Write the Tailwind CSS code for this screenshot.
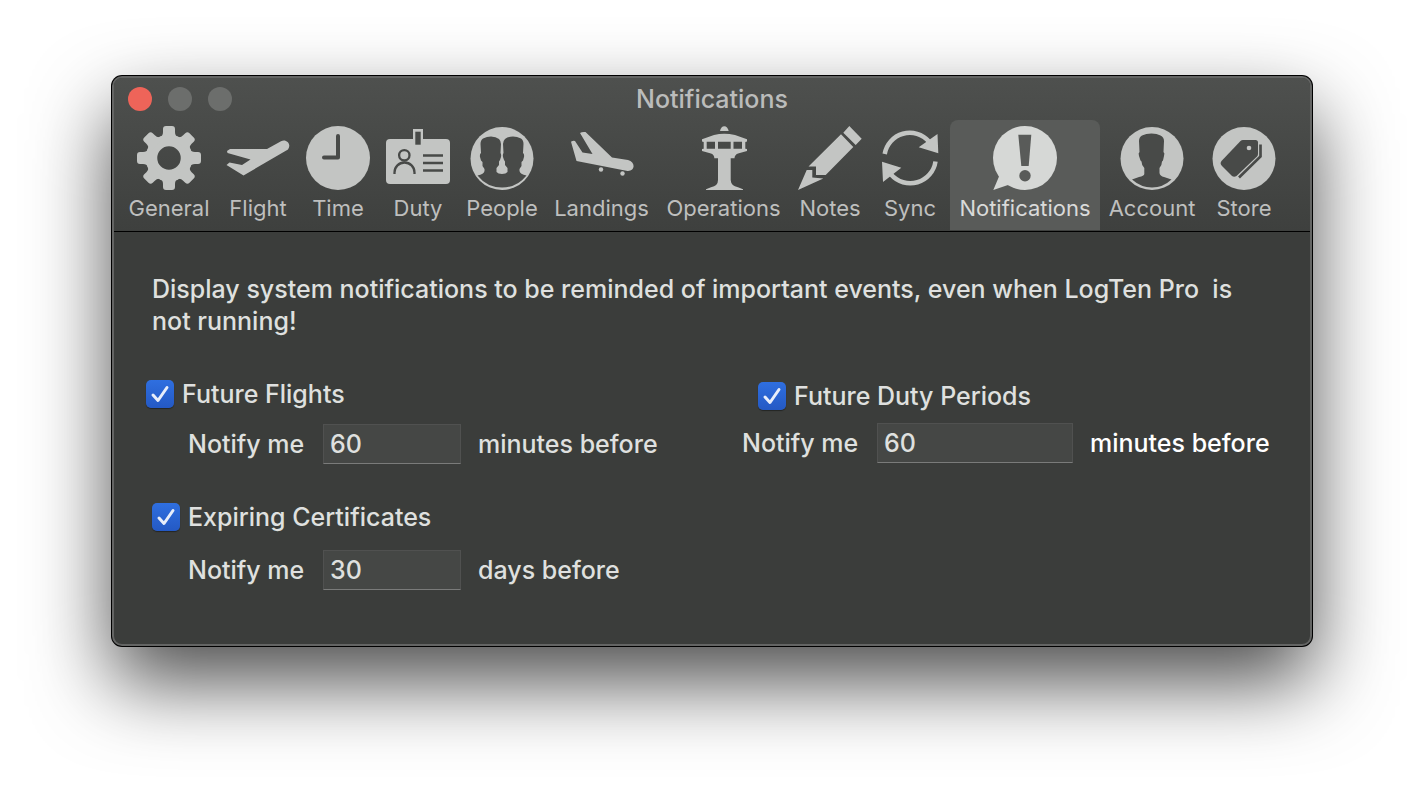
<!DOCTYPE html>
<html lang="en">
  <head>
    <meta charset="UTF-8" />
    <meta name="viewport" content="width=device-width, initial-scale=1.0" />
    <title>Notifications</title>
    <script src="https://cdn.jsdelivr.net/npm/@tailwindcss/browser@4"></script>
  </head>
  <body class="bg-white font-['Inter','Liberation_Sans',sans-serif] text-[25px] leading-8 font-medium text-[#dfe0df]">
    <main
      class="mx-28 mt-[76px] mb-36 rounded-[10px] bg-[#3b3d3b] border-2 border-[#646564] overflow-hidden shadow-[0_0_0_1px_#000,0_36px_80px_rgba(0,0,0,0.7)]"
    >
      <!-- Title bar and toolbar -->
      <header class="bg-linear-to-b from-[#4e504e] to-[#3e403e] border-b border-black pb-px">
        <div class="grid grid-cols-[1fr_auto_1fr] items-center h-[42px] px-[14px]">
          <div class="flex gap-4 pb-px">
            <button aria-label="Close" class="size-6 rounded-full bg-[#ee6459]"></button>
            <button aria-label="Minimize" class="size-6 rounded-full bg-[#6c6e6c]"></button>
            <button aria-label="Zoom" class="size-6 rounded-full bg-[#6c6e6c]"></button>
          </div>
          <h1 class="font-medium text-[#bbbcbb]">Notifications</h1>
        </div>

        <nav
          class="flex pl-[6px] text-[22px] leading-7 font-normal text-[#bebfbe] *:flex *:flex-col *:items-center *:shrink-0 *:h-[110px] *:pt-[6px] *:gap-1 [&_svg]:size-16 [&_svg]:fill-[#c3c5c3] [&_.cut]:fill-[#484a48]"
        >
          <button class="w-[98px]">
            <svg viewBox="0 0 64 64">
              <defs>
                <path id="tooth" d="M23 11Q26 10 26 6V3Q26 0 29 0H35Q38 0 38 3V6Q38 10 41 11V14H23Z" />
              </defs>
              <circle cx="32" cy="32" r="17.5" stroke="#c3c5c3" stroke-width="11.5" class="fill-none" />
              <use href="#tooth" />
              <use href="#tooth" transform="rotate(45 32 32)" />
              <use href="#tooth" transform="rotate(90 32 32)" />
              <use href="#tooth" transform="rotate(135 32 32)" />
              <use href="#tooth" transform="rotate(180 32 32)" />
              <use href="#tooth" transform="rotate(225 32 32)" />
              <use href="#tooth" transform="rotate(270 32 32)" />
              <use href="#tooth" transform="rotate(315 32 32)" />
            </svg>
            General
          </button>
          <button class="w-20">
            <svg viewBox="0 0 64 64">
              <path d="M1 25L4 23H41L55 15.300C60 12.500 66 18 62 23.500L17.500 49.500L.5 39L3.500 36.500L16 39L24.500 33.500L1.500 27Z" />
            </svg>
            Flight
          </button>
          <button class="w-20">
            <svg viewBox="0 0 64 64">
              <circle cx="32" cy="32" r="32" />
              <path d="M32 10V31.500H18" class="fill-none" stroke="#484a48" stroke-width="4" stroke-linecap="round" stroke-linejoin="round" />
            </svg>
            Time
          </button>
          <button class="w-20">
            <svg viewBox="0 0 64 64">
              <rect y="13" width="64" height="45" rx="4" />
              <rect x="27" y="3" width="10" height="16" />
              <rect x="29.3" y="5.7" width="5.4" height="13" class="cut" />
              <g class="fill-none" stroke="#484a48" stroke-width="2.3">
                <circle cx="18.3" cy="29.3" r="5.2" />
                <path d="M8.500 48V46.500A9.800 9.800 0 0 1 28.500 46.500V48M37 29.500H57M37 37H57M37 44.500H57" />
              </g>
            </svg>
            Duty
          </button>
          <button class="w-[88px]">
            <svg viewBox="0 0 64 64">
              <circle cx="32" cy="32.500" r="31.500" />
              <path
                class="cut"
                d="M11 27L10.500 18Q10.500 14 13 12.500Q17 10.500 21 10.500Q26 10.500 29 13Q31 15 31 18L30.500 27Q31.500 28 31 31L30 34L29 35.500V39L26.500 42V46Q28 48 32 48Q36 48 37.500 46V42L35 39V35.500L34 34L33 31Q32.500 28 33.500 27L33 18Q33 15 35 13Q38 10.500 43 10.500Q47 10.500 51 12.500Q53.500 14 53.500 18L53 27Q54.500 28 54 31L53 34.500L51.500 36V40L49.500 43V45Q50 48 56.500 49.500Q47 61.500 32 61.500Q17 61.500 7.500 49.500Q14 48 14.500 45V43L12.500 40V36L11 34.500L10 31Q9.500 28 11 27Z"
              />
            </svg>
            People
          </button>
          <button class="w-[111px]">
            <svg viewBox="0 0 64 64">
              <path d="M1 15.700Q3 14.500 5 15L12.500 26.500L22.500 28L10 7Q12 5.500 15.500 6L42 31.500L58 34C66 36 65 45.500 57.500 45L6.500 35Z" />
              <circle cx="31" cy="43.500" r="2.200" />
              <circle cx="52.500" cy="47.500" r="2.200" />
            </svg>
            Landings
          </button>
          <button class="w-[133px]">
            <svg viewBox="0 0 64 64">
              <path d="M28 5Q29 .3 32.300 .3Q35.500 .3 36.700 5Z" />
              <path
                fill-rule="evenodd"
                d="M10 13.300L22 9Q32 6.500 43 9L55 13.300V15.500L53.300 16V22.700L55 23V25L46 27.500Q42.500 29 42.500 32.300H38.700V54Q39 60 46 61.300L51 63.200V64H14V63.200L19 61.300Q26 60 26 54V32.300H22.300Q22.500 29 19 27.500L10 25V23L11.700 22.700V16L10 15.500ZM14.700 15.700V22.700H23V15.700ZM26 15.700V22.700H38.700V15.700ZM41.500 15.700V22.700H50V15.700Z"
              />
            </svg>
            Operations
          </button>
          <button class="w-20">
            <svg viewBox="0 0 64 64">
              <path d="M51.300 0L63.700 12.700L57.700 19L45.300 6.700ZM43 8.300L55.300 21L27.700 49H18V40.500H10.500ZM8.700 44H14.300V51.500L25.300 52.500L0 64Z" />
            </svg>
            Notes
          </button>
          <button class="w-20">
            <svg viewBox="0 0 64 64">
              <path d="M6.700 28A25.500 25.500 0 0 1 51 15.500M57.500 35.500A25.500 25.500 0 0 1 13 48.500" class="fill-none" stroke="#c3c5c3" stroke-width="4.500" />
              <path d="M59.500 8L60.300 27.300L40.700 21.300ZM4 35.700L23.300 41.700L5 56Z" />
            </svg>
            Sync
          </button>
          <button class="w-[150px] rounded-t-lg bg-[#595b59] text-[#d9dad9]" aria-current="page">
            <svg viewBox="0 0 64 64">
              <g fill="#d6d8d6">
                <circle cx="32" cy="32" r="32" />
                <path d="M6 50.500L.3 64L15 59L20 50L8 45Z" />
              </g>
              <g fill="#595b59">
                <path d="M25.300 8.700H38.300L35.700 40H28.300Z" />
                <circle cx="32" cy="49.700" r="5.700" />
              </g>
            </svg>
            Notifications
          </button>
          <button class="w-[104px]">
            <svg viewBox="0 0 64 64">
              <circle cx="32" cy="32.500" r="31.500" />
              <path
                class="cut"
                d="M19.500 26L19 15Q19 11 22 9.500Q26 7.500 31.500 7.500Q37 7.500 40.500 9.500Q44 11 44 15L43.500 26Q45 27 44 30L43 34.500L42 35.500Q42 39 39.500 42V47Q40 50 44 51L51.500 53.500Q43 61.500 32 61.500Q21 61.500 12 53.500L19 51Q24 50 24.300 48V42Q21.500 39 21.500 35.500L20.500 34.500L19 30Q18 27 19.500 26Z"
              />
            </svg>
            Account
          </button>
          <button class="w-20">
            <svg viewBox="0 0 64 64">
              <circle cx="32" cy="32.500" r="31.500" />
              <path class="cut" d="M28.500 15Q29.500 14 31 14H43.500Q46 14 46 16.500V28Q46 29.500 45 30.500L24.500 50Q22 51.500 20 50L10 40Q7.500 37.500 9.500 35Z" />
              <circle cx="37" cy="22" r="2.300" />
              <path d="M48.500 18.500V30.500L27 51.500" class="fill-none" stroke="#484a48" stroke-width="2.700" />
            </svg>
            Store
          </button>
        </nav>
      </header>

      <!-- Notification settings -->
      <form class="px-[38px] pt-[41px] pb-[54px]">
        <p>
          Display system notifications to be reminded of important events, even when LogTen Pro&nbsp; is not running!
        </p>

        <div class="grid grid-cols-[59fr_53fr] mt-[41px]">
          <fieldset>
            <label class="-ml-[6px] flex items-center gap-2">
              <span class="grid size-7">
                <input type="checkbox" checked class="col-start-1 row-start-1 appearance-none rounded-[5px] bg-linear-to-b from-[#2f6fe0] to-[#2459c4] shadow-[0_1px_1px_rgba(0,0,0,0.4)]" />
                <svg viewBox="0 0 28 28" class="col-start-1 row-start-1 fill-none pointer-events-none"><path d="M7 15L12 20.500L21 7.500" stroke="#e8eefa" stroke-width="3" stroke-linecap="round" stroke-linejoin="round" /></svg>
              </span>
              Future Flights
            </label>
            <div class="flex items-center mt-[14px] pl-9">
              <label for="flightMinutes" class="w-[135px]">Notify me</label>
              <input id="flightMinutes" type="text" value="60" class="w-[138px] h-10 px-[6px] bg-[#454745] border border-[#505150] border-b-[#7a7b7a]" />
              <span class="ml-[17px]">minutes before</span>
            </div>
          </fieldset>

          <fieldset>
            <label class="flex items-center gap-2 pl-4 pt-[2px]">
              <span class="grid size-7">
                <input type="checkbox" checked class="col-start-1 row-start-1 appearance-none rounded-[5px] bg-linear-to-b from-[#2f6fe0] to-[#2459c4] shadow-[0_1px_1px_rgba(0,0,0,0.4)]" />
                <svg viewBox="0 0 28 28" class="col-start-1 row-start-1 fill-none pointer-events-none"><path d="M7 15L12 20.500L21 7.500" stroke="#e8eefa" stroke-width="3" stroke-linecap="round" stroke-linejoin="round" /></svg>
              </span>
              Future Duty Periods
            </label>
            <div class="flex items-center mt-[11px]">
              <label for="dutyMinutes" class="w-[135px]">Notify me</label>
              <input id="dutyMinutes" type="text" value="60" class="w-[196px] h-10 px-[6px] bg-[#454745] border border-[#505150] border-b-[#7a7b7a]" />
              <span class="ml-[17px] text-white whitespace-nowrap">minutes before</span>
            </div>
          </fieldset>

          <fieldset class="mt-[37px]">
            <label class="flex items-center gap-2">
              <span class="grid size-7">
                <input type="checkbox" checked class="col-start-1 row-start-1 appearance-none rounded-[5px] bg-linear-to-b from-[#2f6fe0] to-[#2459c4] shadow-[0_1px_1px_rgba(0,0,0,0.4)]" />
                <svg viewBox="0 0 28 28" class="col-start-1 row-start-1 fill-none pointer-events-none"><path d="M7 15L12 20.500L21 7.500" stroke="#e8eefa" stroke-width="3" stroke-linecap="round" stroke-linejoin="round" /></svg>
              </span>
              Expiring Certificates
            </label>
            <div class="flex items-center mt-[17px] pl-9">
              <label for="certificateDays" class="w-[135px]">Notify me</label>
              <input id="certificateDays" type="text" value="30" class="w-[138px] h-10 px-[6px] bg-[#454745] border border-[#505150] border-b-[#7a7b7a]" />
              <span class="ml-[17px]">days before</span>
            </div>
          </fieldset>
        </div>
      </form>
    </main>
  </body>
</html>
